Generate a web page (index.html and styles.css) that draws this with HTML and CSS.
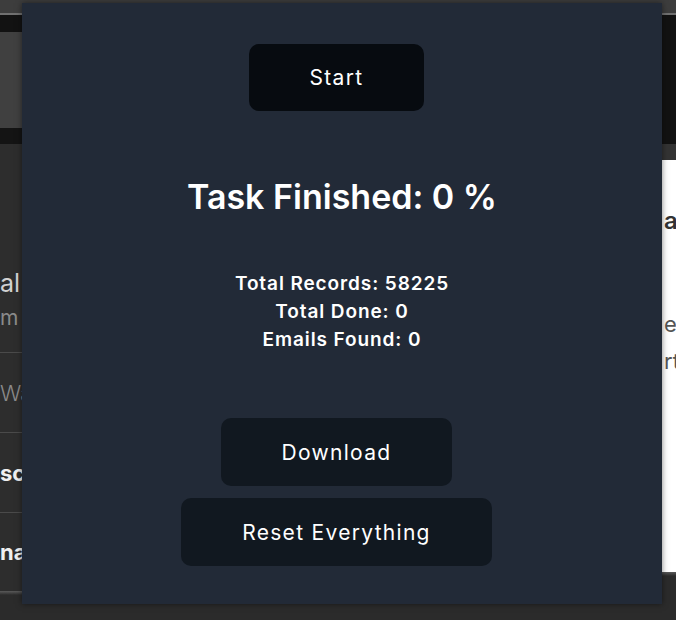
FILE: index.html
```html
<!DOCTYPE html>
<html lang="en">
<head>
<meta charset="utf-8">
<title>Task</title>
<link rel="stylesheet" href="styles.css">
</head>
<body>
<div class="page">
  <div class="topbar"></div>
  <div class="navbar"></div>
  <div class="content">
    <div class="left">
      <div class="hero"></div>
      <div class="band"></div>
      <ul class="list">
        <li class="item item-first"><span class="title">al</span><span class="sub">m</span></li>
        <li class="item"><span class="muted">Wa</span></li>
        <li class="item"><span class="strong">sc</span></li>
        <li class="item"><span class="strong">na</span></li>
      </ul>
      <div class="footer-line"></div>
    </div>
    <div class="right">
      <div class="rblack"></div>
      <div class="rgray"></div>
      <div class="card">
        <span class="card-title">a</span>
        <span class="card-text card-text-first">e</span>
        <span class="card-text">rt</span>
      </div>
      <div class="footer-line"></div>
    </div>
  </div>

  <div class="popup">
    <button class="btn btn-start">Start</button>
    <h1 class="heading">Task Finished: 0 %</h1>
    <div class="stats">
      <p>Total Records: 58225</p>
      <p>Total Done: 0</p>
      <p>Emails Found: 0</p>
    </div>
    <div class="actions">
      <button class="btn btn-dark">Download</button>
      <button class="btn btn-dark">Reset Everything</button>
    </div>
  </div>
</div>
</body>
</html>
```

FILE: styles.css
```css
* { box-sizing: border-box; }
html, body { margin: 0; padding: 0; }
body {
  width: 676px;
  height: 620px;
  overflow: hidden;
  background: #2b2b2b;
  font-family: Inter, "Noto Sans", "Liberation Sans", sans-serif;
}
.page { position: relative; width: 676px; height: 620px; }
.topbar { height: 15px; background: #3d3d3d; border-bottom: 2px solid #707070; }
.navbar { height: 17px; background: #121212; }
.content { display: flex; justify-content: space-between; }
.left { width: 22px; overflow: hidden; white-space: nowrap; }
.hero { height: 96px; background: #404040; }
.band { height: 16px; background: #141414; }
.list { list-style: none; margin: 0; padding: 0; background: #2d2d2d; }
.item {
  height: 80px;
  display: flex;
  flex-direction: column;
  justify-content: center;
  border-bottom: 1px solid #4a4a4a;
  font-size: 22px;
}
.list .item-first { height: 209px; justify-content: flex-end; padding-bottom: 19px; }
.item:last-child { border-bottom: none; height: 78px; }
.title { color: #d2d2d2; font-size: 25px; line-height: 40px; }
.sub { color: #8a8a8a; font-size: 21px; line-height: 30px; }
.muted { color: #8a8a8a; font-weight: 300; }
.strong { color: #f0f0f0; font-weight: 700; }
.footer-line { height: 4px; background: linear-gradient(#5a5a5a, #2b2b2b); }
.right { width: 14px; overflow: hidden; white-space: nowrap; }
.rblack { height: 112px; background: #121212; }
.rgray { height: 16px; background: #333333; }
.card {
  height: 412px;
  background: #ffffff;
  display: flex;
  flex-direction: column;
  padding: 46px 0 0 2px;
}
.card-title { color: #333; font-size: 24px; font-weight: 600; line-height: 30px; }
.card-text { color: #555; font-size: 22px; line-height: 37px; }
.card-text-first { margin-top: 70px; }

.popup {
  position: absolute;
  left: 22px;
  top: 3px;
  width: 640px;
  height: 601px;
  background: #222a37;
  box-shadow: 0 0 6px rgba(0,0,0,0.5);
  display: flex;
  flex-direction: column;
  align-items: center;
  padding-top: 41px;
  color: #ffffff;
}
.btn {
  font-family: Inter, "Noto Sans", "Liberation Sans", sans-serif;
  font-size: 21px;
  font-weight: 400;
  color: #ffffff;
  border: none;
  border-radius: 10px;
  height: 68px;
  padding: 0 61px;
  letter-spacing: 1.3px;
  margin-right: 11px;
}
.btn-start { background: #070b10; height: 67px; }
.heading {
  margin: 66px 0 0;
  font-size: 34px;
  font-weight: 600;
  line-height: 40px;
  letter-spacing: 0;
}
.stats { margin-top: 53px; text-align: center; }
.stats p {
  margin: 0;
  font-size: 19px;
  font-weight: 600;
  line-height: 28px;
  letter-spacing: 0.9px;
}
.actions {
  margin-top: 64px;
  display: flex;
  flex-direction: column;
  align-items: center;
  gap: 12px;
}
.btn-dark { background: #111820; }
```
